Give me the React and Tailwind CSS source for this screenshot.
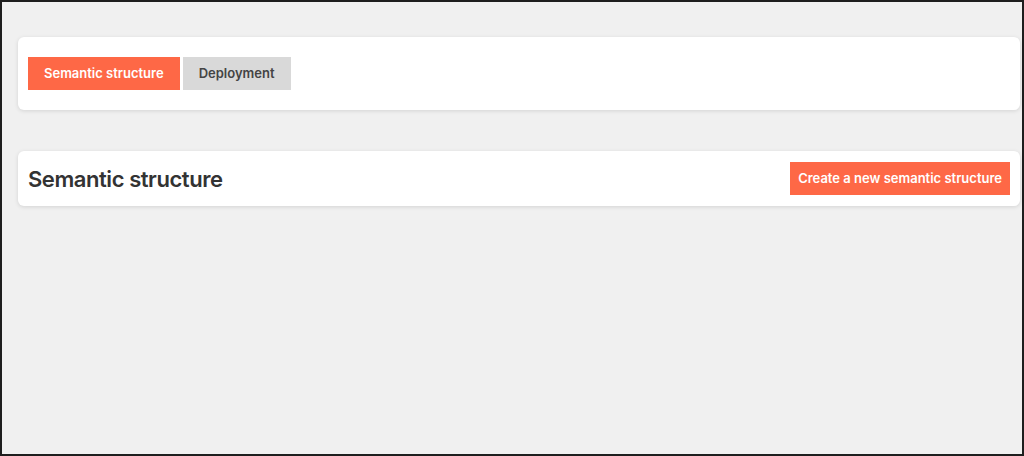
const App = () => {
  return (
    <div
      className="h-[456px] w-[1024px] border-2 border-[#1e1e1e] bg-[#f0f0f0] pl-4 pr-[2px] pt-[35px] flex flex-col gap-[41px]"
      style={{ fontFamily: 'Inter, "Liberation Sans", sans-serif' }}
    >
      {/* Tabs */}
      <div className="bg-white rounded-md shadow-[0_1px_4px_rgba(0,0,0,0.12)] px-[10px] py-5 flex gap-[3px]">
        <button className="h-[33px] px-4 bg-[#fe6846] text-white text-[13px] font-semibold">
          Semantic structure
        </button>
        <button className="h-[33px] px-4 bg-[#d9d9d9] text-[#444] text-[13px] font-semibold">
          Deployment
        </button>
      </div>

      {/* Header */}
      <div className="bg-white rounded-md shadow-[0_1px_4px_rgba(0,0,0,0.12)] pl-[10px] pr-[10px] py-[11px] flex items-center justify-between">
        <h1 className="text-[22px] leading-[31px] pt-[2px] font-semibold tracking-[-0.02em] text-[#333]">Semantic structure</h1>
        <button className="h-[33px] px-2 bg-[#fe6846] text-white text-[13px] font-semibold">
          Create a new semantic structure
        </button>
      </div>
    </div>
  );
};

export default App;
